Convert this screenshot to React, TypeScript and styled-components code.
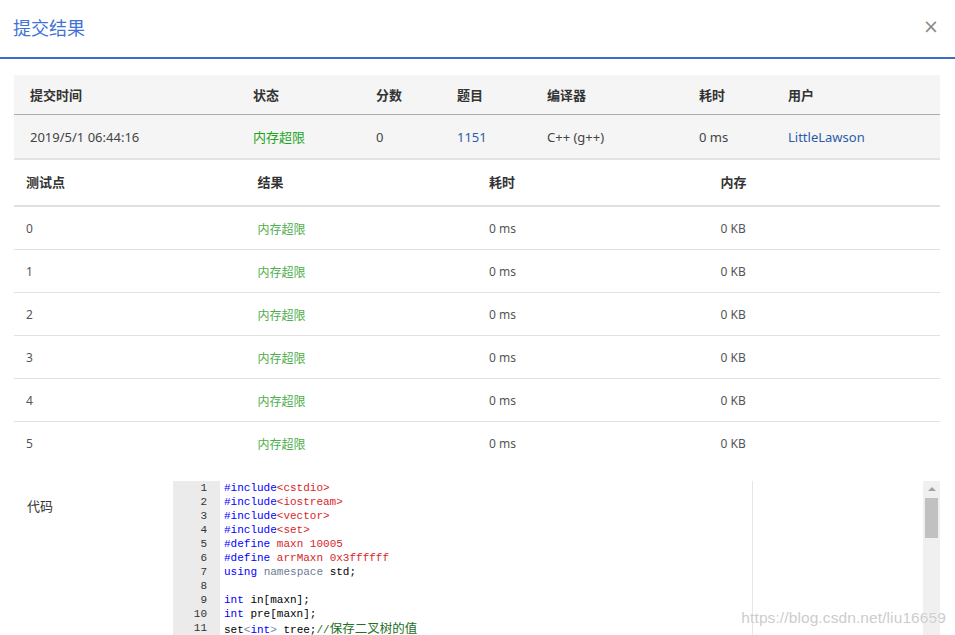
import React from "react";
import styled, { createGlobalStyle } from "styled-components";

const Global = createGlobalStyle`
  html, body { margin: 0; padding: 0; background: #fff; }
  body { font-family: "Segoe UI", "Noto Sans", "Noto Sans CJK SC", sans-serif; color: #333; }
  * { box-sizing: border-box; }
`;

const Dialog = styled.div`
  width: 955px;
  height: 635px;
  overflow: hidden;
  position: relative;
  background: #fff;
`;

const Header = styled.div`
  height: 59px;
  padding: 0 16px 0 13px;
  border-bottom: 2px solid #3b6cc9;
  display: flex;
  align-items: center;
  justify-content: space-between;
`;

const Title = styled.h4`
  margin: 0;
  font-family: "Noto Sans CJK SC", sans-serif;
  font-weight: 400;
  font-size: 18px;
  color: #3f74d6;
  line-height: 1;
  padding-bottom: 3px;
`;

const Close = styled.span`
  font-family: "DejaVu Sans", sans-serif;
  font-size: 19px;
  color: #8a8a8a;
  line-height: 1;
  padding-bottom: 4px;
`;

const Body = styled.div`
  padding: 16px 15px 0 14px;
`;

const SummaryGrid = styled.div`
  display: grid;
  grid-template-columns: 223px 123px 81px 90px 152px 89px 168px;
  background: #f5f5f5;
  border-bottom: 2px solid #e3e3e3;
`;

const SumHead = styled.div`
  height: 40px;
  padding: 0 16px;
  display: flex;
  align-items: center;
  font-size: 13px;
  font-weight: 700;
  font-family: "Noto Sans CJK SC", sans-serif;
  color: #333;
  border-bottom: 1px solid #adadad;
`;

const SumCell = styled.div<{ $color?: string }>`
  height: 43px;
  padding: 0 16px;
  display: flex;
  align-items: center;
  font-size: 13px;
  color: ${(p) => p.$color || "#444"};
`;

const Cjk = styled.span`
  font-family: "Noto Sans CJK SC", sans-serif;
`;

const CaseGrid = styled.div`
  display: grid;
  grid-template-columns: repeat(4, 1fr);
`;

const CaseHead = styled.div`
  height: 47px;
  padding: 0 12px 2px;
  display: flex;
  align-items: center;
  font-size: 13px;
  font-weight: 700;
  font-family: "Noto Sans CJK SC", sans-serif;
  color: #333;
  border-bottom: 2px solid #dde0e3;
`;

const CaseCell = styled.div<{ $color?: string; $last?: boolean }>`
  height: 43px;
  padding: 0 12px;
  display: flex;
  align-items: center;
  font-size: 12px;
  color: ${(p) => p.$color || "#555"};
  border-bottom: ${(p) => (p.$last ? "none" : "1px solid #e0e2e5")};
`;

const CodeRow = styled.div`
  display: flex;
  margin-top: 16px;
`;

const CodeLabel = styled.div`
  width: 159px;
  padding: 15px 0 0 13px;
  font-size: 13px;
  font-family: "Noto Sans CJK SC", sans-serif;
  color: #333;
`;

const Editor = styled.div`
  flex: 1;
  height: 155px;
  display: flex;
  position: relative;
  overflow: hidden;
`;

const Gutter = styled.div`
  width: 47px;
  background: #ebebeb;
  padding-right: 13px;
  text-align: right;
  font-family: "Liberation Mono", monospace;
  font-size: 11px;
  line-height: 14px;
  color: #333;
`;

const Lines = styled.div`
  flex: 1;
  padding-left: 4px;
  font-family: "Liberation Mono", monospace;
  font-size: 11px;
  line-height: 14px;
  color: #000;
  white-space: pre;
  position: relative;
`;

const Line = styled.div`
  height: 14px;
`;

const PrintMargin = styled.div`
  position: absolute;
  top: 0;
  bottom: 0;
  left: 532px;
  width: 1px;
  background: #e6e6e6;
`;

const Tok = styled.span<{ $c: string }>`
  color: ${(p) => p.$c};
`;

const CjkComment = styled.span`
  color: #236e24;
  font-family: "Noto Sans CJK SC", sans-serif;
  font-size: 12.5px;
`;

const Scrollbar = styled.div`
  width: 17px;
  background: #f0f0f0;
  display: flex;
  flex-direction: column;
  align-items: center;
  padding-top: 6px;
`;

const Arrow = styled.div`
  width: 0;
  height: 0;
  border-left: 4px solid transparent;
  border-right: 4px solid transparent;
  border-bottom: 4px solid #a3a3a3;
`;

const Thumb = styled.div`
  width: 13px;
  height: 40px;
  background: #c1c1c1;
  margin-top: 7px;
`;

const Watermark = styled.div`
  position: absolute;
  right: 9px;
  bottom: 8px;
  font-family: "Liberation Sans", Arial, sans-serif;
  font-size: 15.5px;
  color: rgba(190, 190, 190, 0.8);
  text-shadow: 0 0 1px #fff, 0 0 1px #fff;
  letter-spacing: 0.1px;
`;

const KW = "#0000ff";
const RED = "#d7262a";
const NS = "#6d7a96";
const OP = "#7a84a8";

const codeLines: React.ReactNode[] = [
  <><Tok $c={KW}>#include</Tok><Tok $c={RED}>&lt;cstdio&gt;</Tok></>,
  <><Tok $c={KW}>#include</Tok><Tok $c={RED}>&lt;iostream&gt;</Tok></>,
  <><Tok $c={KW}>#include</Tok><Tok $c={RED}>&lt;vector&gt;</Tok></>,
  <><Tok $c={KW}>#include</Tok><Tok $c={RED}>&lt;set&gt;</Tok></>,
  <><Tok $c={KW}>#define</Tok> <Tok $c={RED}>maxn 10005</Tok></>,
  <><Tok $c={KW}>#define</Tok> <Tok $c={RED}>arrMaxn 0x3ffffff</Tok></>,
  <><Tok $c={KW}>using</Tok> <Tok $c={NS}>namespace</Tok> std;</>,
  <>{" "}</>,
  <><Tok $c={KW}>int</Tok> in[maxn];</>,
  <><Tok $c={KW}>int</Tok> pre[maxn];</>,
  <>set<Tok $c={OP}>&lt;</Tok><Tok $c={KW}>int</Tok><Tok $c={OP}>&gt;</Tok> tree;<Tok $c="#236e24">//</Tok><CjkComment>保存二叉树的值</CjkComment></>,
];

const summaryHead = ["提交时间", "状态", "分数", "题目", "编译器", "耗时", "用户"];
const cases = [0, 1, 2, 3, 4, 5];

export default function App() {
  return (
    <>
      <Global />
      <Dialog>
        <Header>
          <Title>提交结果</Title>
          <Close>×</Close>
        </Header>
        <Body>
          <SummaryGrid>
            {summaryHead.map((h) => (
              <SumHead key={h}>{h}</SumHead>
            ))}
            <SumCell>2019/5/1 06:44:16</SumCell>
            <SumCell $color="#1ca51c">
              <Cjk>内存超限</Cjk>
            </SumCell>
            <SumCell>0</SumCell>
            <SumCell $color="#2b5ca8">1151</SumCell>
            <SumCell>C++ (g++)</SumCell>
            <SumCell>0 ms</SumCell>
            <SumCell $color="#2b5ca8">LittleLawson</SumCell>
          </SummaryGrid>
          <CaseGrid>
            <CaseHead>测试点</CaseHead>
            <CaseHead>结果</CaseHead>
            <CaseHead>耗时</CaseHead>
            <CaseHead>内存</CaseHead>
            {cases.map((c) => {
              const last = c === cases.length - 1;
              return (
                <React.Fragment key={c}>
                  <CaseCell $last={last}>{c}</CaseCell>
                  <CaseCell $last={last} $color="#4cae4c">
                    <Cjk>内存超限</Cjk>
                  </CaseCell>
                  <CaseCell $last={last}>0 ms</CaseCell>
                  <CaseCell $last={last}>0 KB</CaseCell>
                </React.Fragment>
              );
            })}
          </CaseGrid>
          <CodeRow>
            <CodeLabel>代码</CodeLabel>
            <Editor>
              <Gutter>
                {codeLines.map((_, i) => (
                  <Line key={i}>{i + 1}</Line>
                ))}
              </Gutter>
              <Lines>
                <PrintMargin />
                {codeLines.map((l, i) => (
                  <Line key={i}>{l}</Line>
                ))}
              </Lines>
              <Scrollbar>
                <Arrow />
                <Thumb />
              </Scrollbar>
            </Editor>
          </CodeRow>
        </Body>
        <Watermark>https://blog.csdn.net/liu16659</Watermark>
      </Dialog>
    </>
  );
}
